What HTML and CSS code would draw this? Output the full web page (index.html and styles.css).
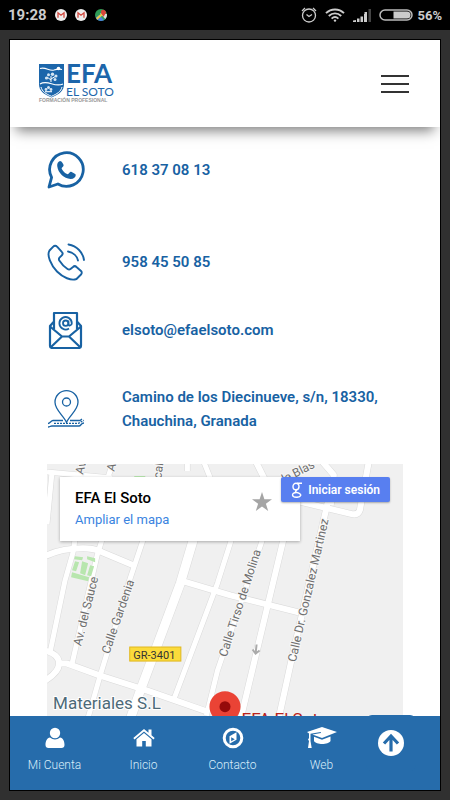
FILE: index.html
```html
<!DOCTYPE html>
<html lang="es">
<head>
    <meta charset="UTF-8">
    <meta name="viewport" content="width=device-width, initial-scale=1.0">
    <title>EFA El Soto - Contacto</title>
    <link rel="stylesheet" href="styles.css">
</head>
<body>
    <div class="status-bar">
        <span class="time">19:28</span>
        <svg class="notification" viewBox="0 0 12 12">
            <circle cx="6" cy="6" r="6" fill="#eee"/>
            <path d="M3 8.700V3.800l3 2.400 3-2.400v4.900" fill="none" stroke="#d0463b" stroke-width="1.300"/>
        </svg>
        <svg class="notification" viewBox="0 0 12 12">
            <circle cx="6" cy="6" r="6" fill="#eee"/>
            <path d="M3 8.700V3.800l3 2.400 3-2.400v4.900" fill="none" stroke="#d0463b" stroke-width="1.300"/>
        </svg>
        <svg class="notification" viewBox="0 0 12 12">
            <clipPath id="round"><circle cx="6" cy="6" r="6"/></clipPath>
            <g clip-path="url(#round)">
                <rect width="12" height="12" fill="#2f9c57"/>
                <path d="M5 4l7 8V5z" fill="#ddd"/>
                <path d="M0 9l4-3 6 6H0z" fill="#4a80dc"/>
                <path d="M1 9l7-6 1 2-7 6z" fill="#eac94b"/>
                <circle cx="8.500" cy="3" r="2.500" fill="#d8443a"/>
                <path d="M6.300 4h4.400L8.500 8z" fill="#d8443a"/>
            </g>
        </svg>
        <div class="status-right">
            <svg class="alarm" viewBox="0 0 16 16" fill="none" stroke="#ccc" stroke-width="1.300">
                <circle cx="8" cy="8.500" r="6.500"/>
                <path d="M5.500 7.500L8 9.500l3-2M1 4l3-3M15 4l-3-3"/>
            </svg>
            <svg class="wifi" viewBox="0 0 20 14" fill="none" stroke="#ccc" stroke-width="1.900">
                <path d="M1 5.200C6 .2 14 .2 19 5.200M3.800 8C7.500 4.500 12.500 4.500 16.200 8M6.600 10.600c2-1.800 4.800-1.800 6.800 0"/>
                <circle cx="10" cy="12.600" r="1.200" fill="#ccc" stroke="none"/>
            </svg>
            <svg class="signal" viewBox="0 0 18 13" fill="#ccc">
                <path d="M0 11.500L3 11v2H0zM4 9.500h2.500V13H4zM7.500 7.500H10V13H7.500zM11 5h3v8h-3z"/>
                <path d="M11.500 3H14v10h-2.500z"/>
                <path d="M15.500 0H18v13h-2.500z" fill="#444"/>
            </svg>
            <svg class="battery" viewBox="0 0 34 12">
                <rect x="1" y="1" width="32" height="10" rx="5" fill="none" stroke="#bbb" stroke-width="1.500"/>
                <path d="M14.500 2.500H28a3.500 3.500 0 0 1 0 7H14.500z" fill="#ccc"/>
            </svg>
            <span class="percent">56%</span>
        </div>
    </div>

    <div class="app">
        <header>
            <a class="logo" href="#" aria-label="EFA El Soto">
                <svg viewBox="0 0 76 42">
                    <path d="M1 1h25v20c0 7-5 10.500-12.500 13.500C6 31.500 1 28 1 21z" fill="#1c66ab"/>
                    <path d="M3 24c1 4.500 5 7 10.500 9.300C19 31 23 28.500 24 24" fill="none" stroke="#fff" stroke-width="1"/>
                    <path d="M2 5.500c6-2 9 3 14 1.500 3-1 5-1.500 8-.5M2 21c8-5 14 4 23 0" fill="none" stroke="#fff" stroke-width="1.200"/>
                    <circle cx="20.500" cy="5.500" r="1.800" fill="#fff"/>
                    <path d="M13 19v-6m0 4l-4-3m4 2l5-3" fill="none" stroke="#fff" stroke-width="1"/>
                    <g fill="#d5e5f3">
                        <circle cx="8.500" cy="15" r="1.600"/>
                        <circle cx="10.500" cy="11.800" r="1.500"/>
                        <circle cx="14.500" cy="11.200" r="1.700"/>
                        <circle cx="18" cy="13" r="1.500"/>
                        <circle cx="17" cy="16.500" r="1.500"/>
                        <circle cx="8" cy="26.500" r="1.400"/>
                        <circle cx="10.500" cy="24.500" r="1.500"/>
                        <circle cx="13" cy="26.500" r="1.400"/>
                        <path d="M7 28h7v1.300H7z"/>
                    </g>
                    <text class="logo-name" x="28" y="20">EFA</text>
                    <text class="logo-place" x="28" y="33">EL SOTO</text>
                    <text class="logo-tag" x="1" y="39">FORMACIÓN PROFESIONAL</text>
                </svg>
            </a>
            <button class="menu-btn" aria-label="Menú"><span></span><span></span><span></span></button>
        </header>

        <main>
            <ul class="contacts">
                <li class="whatsapp">
                    <svg viewBox="0 0 38 38">
                        <path d="M2 36l2.600-9.600a16.800 16.800 0 1 1 6.300 6.600z" fill="none" stroke="#1862a3" stroke-width="2.800" stroke-linejoin="round"/>
                        <path d="M13 10c-2 .5-3 2.500-2.800 5C11 22 17 27.500 23.500 28c3 .1 5.300-1.500 5.300-4.200 0-.7-4.500-3-5.200-3-.8 0-2 2.400-2.700 2.400-2 0-6-4-6.300-6 0-.7 2-1.800 2-2.800 0-.8-1.600-4.400-3.600-4.400z" fill="#1862a3"/>
                    </svg>
                    <a href="#">618 37 08 13</a>
                </li>
                <li>
                    <svg viewBox="0 0 38 38" fill="none" stroke="#1862a3" stroke-width="1.900" stroke-linejoin="round" stroke-linecap="round">
                        <path d="M6 3.800L2.500 7.500C-.5 12 4 22.500 10 28.500c6 6 14 9.500 19.500 7.500l4.500-4.500c1-1 1-2.500 0-3.500l-4.500-4c-1-1-2.500-1-3.500 0l-2.500 2c-1 .8-2 .7-3 0-3-2-6-5-8.200-8.500-.6-1-.5-2 .2-2.800l2.300-2.400c1-1 1-2.500 0-3.500l-4.500-5C9 2.500 7.300 2.500 6 3.800z"/>
                        <path d="M21.500 1.500C30 3 36 9.500 37 17M21 8.500c5 .8 9 4.500 10 9"/>
                    </svg>
                    <a href="#">958 45 50 85</a>
                </li>
                <li>
                    <svg viewBox="0 0 38 38" fill="none" stroke="#1862a3" stroke-width="2.200" stroke-linejoin="round">
                        <path d="M7 18V2h23v16M7 10.500L3 15v19.500c0 1.500 1 2.500 2.500 2.500h26c1.500 0 2.500-1 2.500-2.500V15l-4-4.500"/>
                        <path d="M3 15.500l12 10h7l12-10M4 36l11-10.500M33 36L22 25.500" />
                        <path d="M22 17.600c-2 1.300-4.500 1.300-6.500 0a6.200 6.200 0 1 1 9.300-5.400c0 2.600-3.400 3.300-3.400.6V9.500" stroke-width="1.800"/>
                        <circle cx="18.700" cy="12.200" r="2.700" stroke-width="1.800"/>
                    </svg>
                    <a href="#">elsoto@efaelsoto.com</a>
                </li>
                <li class="address">
                    <svg viewBox="0 0 38 38" fill="none" stroke="#1862a3" stroke-width="1.300">
                        <path d="M19.500 32.500C17 26 8 20 8 12.200a11.500 11.500 0 0 1 23 0C31 20 22 26 19.500 32.500z"/>
                        <circle cx="19.500" cy="12" r="4"/>
                        <path d="M16 30.500H6c-2 0-3 3-5 3M23 30.500h10l2-1.500M1 37c2 0 2-1 4-1h27c2 0 2-3 5-3"/>
                        <path d="M7 33.300h24c2 0 3-2.300 6-2.800" stroke-dasharray="2 1"/>
                    </svg>
                    <address>Camino de los Diecinueve, s/n, 18330, Chauchina, Granada</address>
                </li>
            </ul>

            <section class="map" aria-label="Mapa">
                <svg class="map-canvas" viewBox="0 0 355 300" preserveAspectRatio="xMinYMin slice">
                    <defs>
                        <g id="roads" fill="none" stroke-linejoin="round">
                            <path class="thin" d="M0 60L5 8M0 8l65 6M28 75l-2 13-8 28L3 188"/>
                            <path class="thin" d="M31 13l4-16M61 13l5-16M140-3v10M156-3l8 20"/>
                            <path class="thin" d="M55 75l-5 16-25 108"/>
                            <path class="thin" d="M96 75L83 114 53 211 39 260"/>
                            <path class="medium" d="M-2 92c12-6 26-8 38-8s14 2 19 4l31 13"/>
                            <path class="main" d="M146 75l-13 44-40 107-12 34"/>
                            <path class="thin" d="M184 75l-14 44-44 117M215 75l-45 131-11 45"/>
                            <path class="medium" d="M237 70l-11 46-35 147M280 38l-37 161-14 64"/>
                            <path class="medium" d="M136 117l47 14 68 17"/>
                            <path class="medium" d="M-2 186c9 2 14 7 14 13s-4 11-14 17M11 199h9l33 12 47 15 60 21"/>
                            <path class="medium" d="M208-3l10 20M250 37l54 13c5 1 7-1 8-4l9-49M274-3l12 14-3 30"/>
                        </g>
                    </defs>
                    <rect width="355" height="300" fill="#f0f0f0"/>
                    <use href="#roads" class="road-edge"/>
                    <use href="#roads" class="road"/>
                    <g fill="#b8e6ae">
                        <path d="M28 92l8 1-1 3-8-1zM40 92l8 2v4l-8-3zM28 97l4 1-3 9-4-1zM35 97l6 2-3 12-5-2zM43 101l4 1-3 10-4-1zM25 108l17 5-1 4-17-4zM87 12h11v3H87z"/>
                    </g>
                    <g class="street">
                        <text transform="translate(34 182) rotate(-76)">Av. del Sauce</text>
                        <text transform="translate(62 190) rotate(-71)">Calle Gardenia</text>
                        <text transform="translate(179 193) rotate(-72)">Calle Tirso de Molina</text>
                        <text transform="translate(248 198) rotate(-77)">Calle Dr. Gonzalez Martinez</text>
                        <text transform="translate(233 21) rotate(-27)">de Blas</text>
                        <text transform="translate(36 11) rotate(-76)">Av.</text>
                        <text transform="translate(67 8) rotate(-76)">Av.</text>
                        <text transform="translate(112 28) rotate(-82)">Local</text>
                    </g>
                    <path d="M209 180l-1 9m-3-4l3 4 4-3" fill="none" stroke="#aaa" stroke-width="2"/>
                    <rect x="82.500" y="182.500" width="51" height="14" fill="#fbdb3b" stroke="#e0b820"/>
                    <text class="road-number" x="86" y="194">GR-3401</text>
                    <text class="place" x="6" y="244">Materiales S.L</text>
                    <path d="M162 242a15.500 15.500 0 0 1 31 0c0 10-10 15-15.500 33-5.500-18-15.500-23-15.500-33z" fill="#ea4335"/>
                    <circle cx="177.500" cy="242" r="5.500" fill="#960a0a"/>
                    <text class="marker-name" x="194" y="260">EFA El Soto</text>
                </svg>
                <div class="map-card">
                    <div>
                        <h2>EFA El Soto</h2>
                        <a href="#">Ampliar el mapa</a>
                    </div>
                    <svg viewBox="0 0 20 20"><path d="M10 0l2.400 7.200H20l-6.100 4.500 2.300 7.300-6.200-4.500L3.800 19l2.300-7.300L0 7.200h7.600z" fill="#a5a5a5"/></svg>
                </div>
                <button class="login-btn">
                    <svg viewBox="0 0 12 16" fill="none" stroke="#fff" stroke-width="1.400">
                        <ellipse cx="5" cy="4.500" rx="3" ry="3.300"/>
                        <path d="M6 1.200h5M6 7.800c-2 1-2 2 0 2.700 6 1.500 4 5-.8 4.800C.5 15 0 11 5.500 10.500" />
                    </svg>
                    Iniciar sesión
                </button>
            </section>
        </main>

        <nav>
            <a href="#">
                <svg viewBox="0 0 22 22" fill="#fff"><circle cx="11" cy="6" r="5.200"/><path d="M6 10.500c3 2.500 7 2.500 10 0 3 .5 4.500 3.500 4.500 7.500 0 2-1.200 3-3 3h-13c-1.800 0-3-1-3-3 0-4 1.500-7 4.500-7.500z"/></svg>
                <span>Mi Cuenta</span>
            </a>
            <a href="#">
                <svg viewBox="0 0 22 22" fill="#fff"><path d="M11 2L.3 11l1.200 1.500L11 4.600l9.500 7.900 1.200-1.500L18.500 8.300V2.500h-3v3.300z"/><path d="M11 6l-7.500 6.200V19.500h5.700V14h3.600v5.500h5.700v-7.300z"/></svg>
                <span>Inicio</span>
            </a>
            <a href="#">
                <svg viewBox="0 0 22 22"><circle cx="11" cy="11" r="8.800" fill="none" stroke="#fff" stroke-width="3"/><path d="M7.500 9.200l7-4v7.600l-7 4zM9.200 10.200v4l3.600-2z" fill="#fff" fill-rule="evenodd"/></svg>
                <span>Contacto</span>
            </a>
            <a href="#">
                <svg class="wide" viewBox="0 0 32 22" fill="#fff"><path d="M16 0l15 5-15 6L6.500 7.500 15 6l-.3-1L4.500 6.700V14l1.200 7H2l1-7-1-1.500 1-1.500V6.500L1 5z"/><path d="M8 9.800l8 3 8.500-3.300v4.500c-2 4-14.500 4-16.500 0z"/></svg>
                <span>Web</span>
            </a>
            <button class="top-btn" aria-label="Subir">
                <svg viewBox="0 0 26 26"><circle cx="13" cy="13" r="13" fill="#fff"/><path d="M13 21.500V7M6 13.500l7-7.500 7 7.500" fill="none" stroke="#266cab" stroke-width="3.200"/></svg>
            </button>
        </nav>
    </div>
</body>
</html>
```
FILE: styles.css
```css
* {
    box-sizing: border-box;
}

body {
    margin: 0;
    height: 100vh;
    display: flex;
    flex-direction: column;
    background-color: #303030;
    font-family: Roboto, "Liberation Sans", sans-serif;
}

svg {
    display: block;
    flex-shrink: 0;
}

a {
    text-decoration: none;
}

button {
    border: none;
    padding: 0;
    font-family: inherit;
    cursor: pointer;
}

/* Barra de estado */
.status-bar {
    display: flex;
    align-items: center;
    gap: 8px;
    height: 30px;
    flex-shrink: 0;
    padding: 0 8px;
    background-color: #000;
    color: #ccc;
}

.time {
    font-size: 15px;
    font-weight: 700;
}

.notification {
    width: 12px;
    height: 12px;
}

.status-right {
    display: flex;
    align-items: center;
    gap: 8px;
    margin-left: auto;
}

.alarm {
    width: 16px;
    height: 16px;
}

.wifi {
    width: 20px;
    height: 14px;
}

.signal {
    width: 18px;
    height: 13px;
}

.battery {
    width: 34px;
    height: 12px;
}

.percent {
    margin-left: -4px;
    font-size: 13px;
    font-weight: 700;
}

/* Marco de la aplicación */
.app {
    display: flex;
    flex-direction: column;
    flex: 1;
    min-height: 0;
    margin: 9px;
    border: 1px solid #000;
    background-color: #fff;
    overflow: hidden;
}

header {
    display: flex;
    align-items: center;
    justify-content: space-between;
    height: 87px;
    flex-shrink: 0;
    padding: 0 31px 0 28px;
    background-color: #fff;
    box-shadow: 0 10px 12px -6px rgba(0, 0, 0, 0.5);
    z-index: 1;
}

.logo svg {
    width: 76px;
    height: 42px;
    overflow: visible;
}

.logo-name {
    font: 700 26px Lato, sans-serif;
    fill: #1c66ab;
}

.logo-place {
    font: 400 12px Lato, sans-serif;
    fill: #1c66ab;
}

.logo-tag {
    font: 700 5px "Liberation Sans", sans-serif;
    fill: #999;
}

.menu-btn {
    display: flex;
    flex-direction: column;
    gap: 6px;
    width: 28px;
    background: none;
}

.menu-btn span {
    height: 2px;
    width: 100%;
    background-color: #333;
}

main {
    flex: 1;
    min-height: 0;
    padding: 24px 37px 0;
    overflow: hidden;
}

/* Datos de contacto */
.contacts {
    display: grid;
    gap: 30px;
    margin: 0 0 31px;
    padding: 0;
    list-style: none;
}

.contacts li {
    display: flex;
    align-items: center;
    gap: 37px;
    min-height: 38px;
    color: #1862a3;
    font-size: 15px;
    font-weight: 600;
    line-height: 24px;
}

.contacts svg {
    width: 38px;
    height: 38px;
}

.contacts a {
    color: inherit;
}

.contacts address {
    font-style: normal;
}

.contacts .whatsapp {
    margin-bottom: 24px;
}

.contacts .address {
    margin-top: 6px;
}

/* Mapa */
.map {
    position: relative;
    height: 300px;
    overflow: hidden;
}

.map-canvas {
    width: 100%;
    height: 300px;
}

.road-edge {
    --edge: 1px;
    stroke: #dadada;
}

.road {
    --edge: 0px;
    stroke: #fff;
}

.thin {
    stroke-width: calc(5px + var(--edge));
}

.medium {
    stroke-width: calc(6px + var(--edge));
}

.main {
    stroke-width: calc(9px + var(--edge));
}

.street {
    font-size: 12px;
    fill: #6e6e6e;
    stroke: #f7f7f7;
    stroke-width: 2px;
    paint-order: stroke;
}

.road-number {
    font-size: 11px;
    fill: #333;
}

.place {
    font-size: 17px;
    fill: #4d6a78;
    stroke: #fff;
    stroke-width: 2px;
    paint-order: stroke;
}

.marker-name {
    font-size: 17px;
    fill: #b8231c;
}

.map-card {
    position: absolute;
    top: 13px;
    left: 13px;
    display: flex;
    justify-content: space-between;
    width: 240px;
    height: 64px;
    padding: 11px 28px 0 15px;
    background-color: #fff;
    box-shadow: 0 1px 3px rgba(0, 0, 0, 0.3);
}

.map-card h2 {
    margin: 0 0 4px;
    font-size: 15px;
    font-weight: 500;
    line-height: 20px;
    color: #000;
}

.map-card a {
    display: block;
    font-size: 13px;
    line-height: 16px;
    color: #3a84df;
}

.map-card svg {
    width: 20px;
    height: 20px;
    margin-top: 4px;
}

.login-btn {
    position: absolute;
    top: 13px;
    right: 13px;
    display: flex;
    align-items: center;
    gap: 5px;
    height: 25px;
    padding: 0 10px;
    border-radius: 2px;
    background-color: #587ff0;
    box-shadow: 0 1px 2px rgba(0, 0, 0, 0.3);
    color: #fff;
    font-size: 12px;
    font-weight: 600;
}

.login-btn svg {
    width: 12px;
    height: 16px;
}

/* Menú inferior */
nav {
    position: relative;
    z-index: 1;
    display: grid;
    grid-template-columns: repeat(4, 1fr) 74px;
    height: 74px;
    flex-shrink: 0;
    background-color: #266cab;
}

nav a {
    display: flex;
    flex-direction: column;
    align-items: center;
    gap: 8px;
    padding-top: 11px;
    color: #d9ecfa;
    font-size: 12px;
    font-weight: 300;
    line-height: 16px;
}

nav svg {
    width: 22px;
    height: 22px;
}

nav .wide {
    width: 32px;
}

.top-btn {
    display: flex;
    justify-content: center;
    width: 50px;
    height: 56px;
    margin-top: -1px;
    padding-top: 15px;
    border-radius: 6px;
    background-color: #266cab;
}

.top-btn svg {
    width: 26px;
    height: 26px;
}
```
